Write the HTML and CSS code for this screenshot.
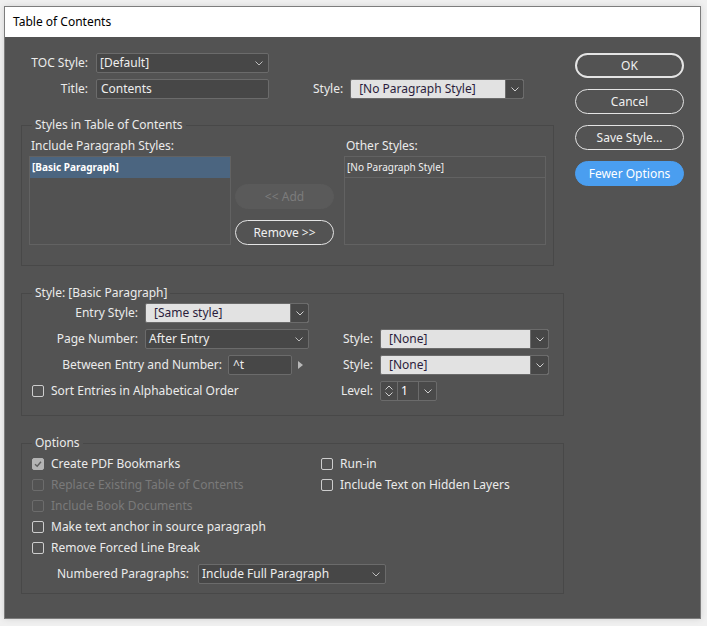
FILE: index.html
```html
<!DOCTYPE html>
<html>
<head>
<meta charset="utf-8">
<link rel="stylesheet" href="styles.css">
</head>
<body>
<div class="window">
  <div class="titlebar">Table of Contents</div>
  <div class="content">
    <div class="main">
      <div class="top">
        <div class="row">
          <span class="lbl-top">TOC Style:</span>
          <div class="dd dark w173"><span class="val">[Default]</span><svg class="chev" width="8" height="5" viewBox="0 0 8 5"><path d="M0.5 0.5 L4 4 L7.5 0.5" fill="none" stroke="currentColor"/></svg></div>
        </div>
        <div class="row row2">
          <span class="lbl-top">Title:</span>
          <div class="field w173">Contents</div>
          <span class="lbl-style">Style:</span>
          <div class="dd light w174"><span class="val">[No Paragraph Style]</span><span class="chevbox"><svg width="8" height="5" viewBox="0 0 8 5"><path d="M0.5 0.5 L4 4 L7.5 0.5" fill="none" stroke="currentColor"/></svg></span></div>
        </div>
      </div>

      <fieldset class="grp grp1">
        <legend>Styles in Table of Contents</legend>
        <div class="lists">
          <div class="listcol">
            <div class="listlbl">Include Paragraph Styles:</div>
            <div class="list">
              <div class="item selected">[Basic Paragraph]</div>
            </div>
          </div>
          <div class="midcol">
            <div class="btn disabled">&lt;&lt; Add</div>
            <div class="btn">Remove &gt;&gt;</div>
          </div>
          <div class="listcol right">
            <div class="listlbl">Other Styles:</div>
            <div class="list">
              <div class="item sep">[No Paragraph Style]</div>
            </div>
          </div>
        </div>
      </fieldset>

      <fieldset class="grp grp2">
        <legend>Style: [Basic Paragraph]</legend>
        <div class="grid">
          <div class="cell">
            <span class="lbl w106">Entry Style:</span>
            <div class="dd light w164"><span class="val">[Same style]</span><span class="chevbox"><svg width="8" height="5" viewBox="0 0 8 5"><path d="M0.5 0.5 L4 4 L7.5 0.5" fill="none" stroke="currentColor"/></svg></span></div>
          </div>
          <div class="cell"></div>
          <div class="cell">
            <span class="lbl w106">Page Number:</span>
            <div class="dd dark w164"><span class="val">After Entry</span><svg class="chev" width="8" height="5" viewBox="0 0 8 5"><path d="M0.5 0.5 L4 4 L7.5 0.5" fill="none" stroke="currentColor"/></svg></div>
          </div>
          <div class="cell">
            <span class="lbl w38">Style:</span>
            <div class="dd light w169"><span class="val">[None]</span><span class="chevbox"><svg width="8" height="5" viewBox="0 0 8 5"><path d="M0.5 0.5 L4 4 L7.5 0.5" fill="none" stroke="currentColor"/></svg></span></div>
          </div>
          <div class="cell">
            <span class="lbl w190">Between Entry and Number:</span>
            <div class="field w64">^t</div>
            <span class="tri"></span>
          </div>
          <div class="cell">
            <span class="lbl w38">Style:</span>
            <div class="dd light w169"><span class="val">[None]</span><span class="chevbox"><svg width="8" height="5" viewBox="0 0 8 5"><path d="M0.5 0.5 L4 4 L7.5 0.5" fill="none" stroke="currentColor"/></svg></span></div>
          </div>
          <div class="cell">
            <span class="cb"></span><span>Sort Entries in Alphabetical Order</span>
          </div>
          <div class="cell">
            <span class="lbl w38">Level:</span>
            <div class="spin">
              <span class="arrows">
                <svg width="8" height="5" viewBox="0 0 8 5"><path d="M0.5 4.5 L4 1 L7.5 4.5" fill="none" stroke="currentColor"/></svg>
                <svg width="8" height="5" viewBox="0 0 8 5"><path d="M0.5 0.5 L4 4 L7.5 0.5" fill="none" stroke="currentColor"/></svg>
              </span>
              <span class="num">1</span>
              <span class="spinchev"><svg width="8" height="5" viewBox="0 0 8 5"><path d="M0.5 0.5 L4 4 L7.5 0.5" fill="none" stroke="currentColor"/></svg></span>
            </div>
          </div>
        </div>
      </fieldset>

      <fieldset class="grp grp3">
        <legend>Options</legend>
        <div class="opts">
          <div class="optcol leftopts">
            <div class="opt"><span class="cb checked"><svg width="10" height="10" viewBox="0 0 10 10"><path d="M2 5.2 L4.2 7.3 L8 2.8" fill="none" stroke="#5f5f5f" stroke-width="1.4"/></svg></span><span>Create PDF Bookmarks</span></div>
            <div class="opt off"><span class="cb"></span><span>Replace Existing Table of Contents</span></div>
            <div class="opt off"><span class="cb"></span><span>Include Book Documents</span></div>
            <div class="opt"><span class="cb"></span><span>Make text anchor in source paragraph</span></div>
            <div class="opt"><span class="cb"></span><span>Remove Forced Line Break</span></div>
          </div>
          <div class="optcol">
            <div class="opt"><span class="cb"></span><span>Run-in</span></div>
            <div class="opt"><span class="cb"></span><span>Include Text on Hidden Layers</span></div>
          </div>
        </div>
        <div class="numrow">
          <span class="numlbl">Numbered Paragraphs:</span>
          <div class="dd dark w188"><span class="val">Include Full Paragraph</span><svg class="chev" width="8" height="5" viewBox="0 0 8 5"><path d="M0.5 0.5 L4 4 L7.5 0.5" fill="none" stroke="currentColor"/></svg></div>
        </div>
      </fieldset>
    </div>

    <div class="buttons">
      <div class="btn default">OK</div>
      <div class="btn">Cancel</div>
      <div class="btn">Save Style...</div>
      <div class="btn primary">Fewer Options</div>
    </div>
  </div>
</div>
</body>
</html>
```
FILE: styles.css
```css
html, body {
  margin: 0;
  padding: 0;
}
body {
  background: #f0f0f0;
  font-family: "Noto Sans", "Open Sans", sans-serif;
  font-size: 12px;
  line-height: 16px;
  color: #ebebeb;
  width: 707px;
  height: 626px;
  overflow: hidden;
}
.window {
  margin: 6px 0 0 4px;
  width: 697px;
  height: 613px;
  box-sizing: border-box;
  border: 1px solid #7d7d7d;
  background: #535353;
  display: flex;
  flex-direction: column;
  box-shadow: 0 0 6px rgba(0,0,0,0.12);
}
.titlebar {
  height: 30px;
  flex: none;
  background: #ffffff;
  color: #000;
  padding-left: 8px;
  display: flex;
  align-items: center;
}
.content {
  display: flex;
  padding: 16px 0 0 16px;
}
.main {
  width: 543px;
  display: flex;
  flex-direction: column;
}
.buttons {
  width: 109px;
  margin-left: 11px;
  display: flex;
  flex-direction: column;
  gap: 11px;
}
.btn {
  height: 25px;
  box-sizing: border-box;
  border: 1px solid #e4e4e4;
  border-radius: 13px;
  display: flex;
  align-items: center;
  justify-content: center;
  color: #f0f0f0;
}
.btn.default {
  border-width: 2px;
  height: 25px;
}
.btn.primary {
  background: #4a9ef0;
  border-color: #4a9ef0;
  color: #fff;
}
.btn.disabled {
  background: #5a5a5a;
  border-color: #5a5a5a;
  color: #7c7c7c;
}

/* top rows */
.row {
  display: flex;
  align-items: center;
  height: 20px;
}
.row2 {
  margin-top: 6px;
}
.lbl-top {
  width: 67px;
  text-align: right;
  margin-right: 8px;
}
.lbl-style {
  margin-left: 44px;
  margin-right: 7px;
}

/* dropdowns & fields */
.dd, .field {
  height: 20px;
  box-sizing: border-box;
  border: 1px solid #6b6b6b;
  border-radius: 2px;
  display: flex;
  align-items: center;
  white-space: nowrap;
  overflow: hidden;
}
.dd.dark, .field {
  background: #474747;
  color: #eeeeee;
  padding-left: 3px;
}
.dd.dark .val { flex: 1; }
.dd.dark .chev {
  color: #bdbdbd;
  margin-right: 5px;
}
.dd.light {
  background: #e2e2e2;
  color: #2b1d3c;
  padding-left: 8px;
}
.dd.light .val { flex: 1; }
.chevbox {
  width: 17px;
  align-self: stretch;
  background: #474747;
  border-left: 1px solid #6b6b6b;
  color: #d0d0d0;
  display: flex;
  align-items: center;
  justify-content: center;
}
.field { padding-left: 4px; }
.w173 { width: 173px; }
.w174 { width: 174px; }
.w164 { width: 164px; }
.w169 { width: 169px; }
.w188 { width: 188px; }
.w64 { width: 64px; }

/* groups */
.grp {
  margin: 0;
  border: 1px solid #484848;
  min-width: 0;
}
.grp legend {
  padding: 0 3px;
  line-height: 16px;
}
.grp1 {
  width: 533px;
  box-sizing: border-box;
  margin-top: 18px;
  padding: 5px 7px 20px 7px;
}
.grp1 legend { margin-left: 3px; }
.lists {
  display: flex;
}
.listcol {
  width: 202px;
  display: flex;
  flex-direction: column;
}
.listcol.right { margin-left: 10px; }
.listlbl {
  padding-left: 2px;
  margin-bottom: 2px;
}
.list {
  height: 89px;
  box-sizing: border-box;
  border: 1px solid #626262;
  background: #525252;
}
.item {
  height: 21px;
  box-sizing: border-box;
  font-size: 10px;
  line-height: 20px;
  padding-left: 2px;
  color: #f0f0f0;
}
.item.selected {
  background: #4b6580;
  font-weight: bold;
  color: #fff;
}
.item.sep {
  border-bottom: 1px solid #626262;
}
.midcol {
  width: 99px;
  margin-left: 4px;
  display: flex;
  flex-direction: column;
  justify-content: flex-end;
  gap: 11px;
}

.grp2 {
  width: 543px;
  box-sizing: border-box;
  margin-top: 19px;
  padding: 2px 14px 14px 10px;
}
.grid {
  display: grid;
  grid-template-columns: 303px 1fr;
  grid-auto-rows: 20px;
  row-gap: 6px;
}
.cell {
  display: flex;
  align-items: center;
  white-space: nowrap;
}
.lbl {
  text-align: right;
  margin-right: 7px;
  flex: none;
}
.w106 { width: 106px; }
.w190 { width: 190px; margin-right: 6px; }
.w38 { width: 38px; }
.tri {
  width: 0;
  height: 0;
  margin-left: 6px;
  border-left: 5px solid #b8b8b8;
  border-top: 4px solid transparent;
  border-bottom: 4px solid transparent;
}
.cb {
  width: 12px;
  height: 12px;
  box-sizing: border-box;
  border: 1px solid #cdcdcd;
  border-radius: 2px;
  margin-right: 7px;
  flex: none;
  display: flex;
  align-items: center;
  justify-content: center;
}
.cb.checked {
  background: #b4b4b4;
  border-color: #b4b4b4;
}
.spin {
  width: 57px;
  height: 20px;
  box-sizing: border-box;
  border: 1px solid #6b6b6b;
  border-radius: 2px;
  background: #4a4a4a;
  display: flex;
}
.arrows {
  width: 16px;
  border-right: 1px solid #6b6b6b;
  display: flex;
  flex-direction: column;
  align-items: center;
  justify-content: center;
  gap: 2px;
  color: #cfcfcf;
}
.num {
  width: 21px;
  border-right: 1px solid #6b6b6b;
  padding-left: 3px;
  box-sizing: border-box;
  line-height: 18px;
  color: #fff;
}
.spinchev {
  flex: 1;
  display: flex;
  align-items: center;
  justify-content: center;
  color: #cfcfcf;
}

.grp3 {
  width: 543px;
  box-sizing: border-box;
  margin-top: 19px;
  padding: 2px 10px 9px 10px;
}
.opts {
  display: flex;
}
.optcol {
  display: flex;
  flex-direction: column;
}
.leftopts {
  width: 289px;
}
.opt {
  height: 21px;
  display: flex;
  align-items: center;
  white-space: nowrap;
}
.opt.off {
  color: #7a7a7a;
}
.opt.off .cb {
  border-color: #6c6c6c;
}
.numrow {
  margin-top: 6px;
  margin-left: 25px;
  display: flex;
  align-items: center;
}
.numlbl {
  width: 141px;
  flex: none;
}
```
